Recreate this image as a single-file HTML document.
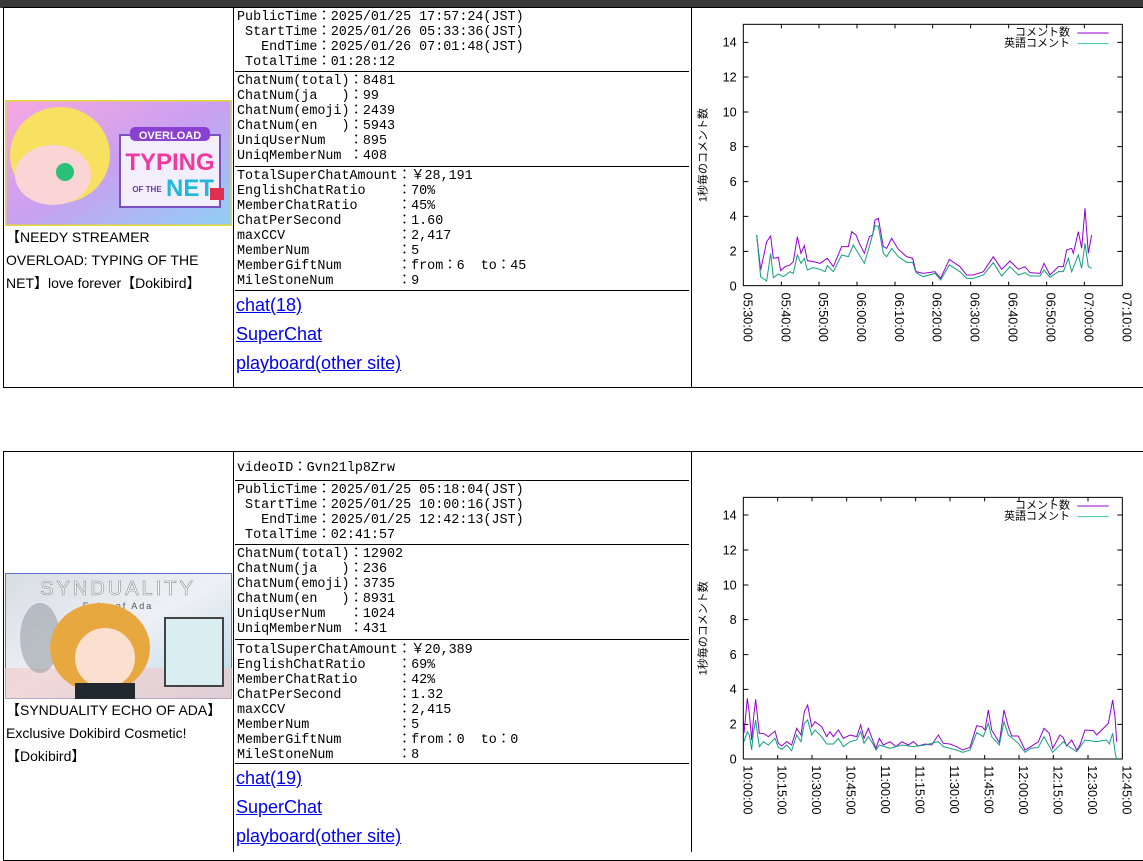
<!DOCTYPE html>
<html><head><meta charset="utf-8"><style>
*{margin:0;padding:0;box-sizing:border-box}
body{width:1143px;height:848px;background:#fff;position:relative;overflow:hidden;font-family:"Liberation Sans","Noto Sans CJK JP",sans-serif}
.a{position:absolute}
.top{left:0;top:0;width:1143px;height:8px;background:#3a3a3a}
.box{border:1px solid #000}
.vl{width:1px;background:#000}
.hl{height:1px;background:#000;left:235px;width:454px}
.m{position:absolute;left:237px;font-family:"Liberation Mono","Noto Sans CJK JP",monospace;font-size:13.4px;line-height:15px;white-space:pre;color:#000}
.t{position:absolute;left:6px;width:226px;font-size:14px;line-height:23px;color:#000}
.lk{position:absolute;left:236px;font-size:18px;color:#0000ee;text-decoration:underline;line-height:20px}
svg text{font-family:"Liberation Sans","Noto Sans CJK JP",sans-serif}
</style></head><body>
<div class="a top"></div>

<!-- table 1 -->
<div class="a box" style="left:3px;top:7px;width:1145px;height:381px"></div>
<div class="a vl" style="left:233px;top:8px;height:380px"></div>
<div class="a vl" style="left:691px;top:8px;height:380px"></div>
<div class="a hl" style="top:71px"></div>
<div class="a hl" style="top:166px"></div>
<div class="a hl" style="top:290px"></div>
<div class="m" style="top:10px">PublicTime：2025/01/25 17:57:24(JST)
 StartTime：2025/01/26 05:33:36(JST)
   EndTime：2025/01/26 07:01:48(JST)
 TotalTime：01:28:12</div>
<div class="m" style="top:74px">ChatNum(total)：8481
ChatNum(ja   )：99
ChatNum(emoji)：2439
ChatNum(en   )：5943
UniqUserNum   ：895
UniqMemberNum ：408</div>
<div class="m" style="top:169px">TotalSuperChatAmount：￥28,191
EnglishChatRatio    ：70%
MemberChatRatio     ：45%
ChatPerSecond       ：1.60
maxCCV              ：2,417
MemberNum           ：5
MemberGiftNum       ：from：6  to：45
MileStoneNum        ：9</div>
<div class="lk" style="top:295px">chat(18)</div>
<div class="lk" style="top:324px">SuperChat</div>
<div class="lk" style="top:353px">playboard(other site)</div>

<svg class="a" style="left:5px;top:100px" width="227" height="126" viewBox="0 0 227 126">
<defs><linearGradient id="g1" x1="0" y1="0" x2="1" y2="1"><stop offset="0" stop-color="#f7a8e0"/><stop offset=".5" stop-color="#c9a0f0"/><stop offset="1" stop-color="#8fd0f5"/></linearGradient></defs>
<rect x="0" y="0" width="227" height="126" fill="url(#g1)" stroke="#e6d830" stroke-width="3"/>
<ellipse cx="55" cy="55" rx="50" ry="48" fill="#f8e060"/>
<ellipse cx="48" cy="75" rx="38" ry="30" fill="#fbd5d5"/>
<circle cx="60" cy="72" r="9" fill="#2ac07a"/>
<rect x="115" y="35" width="100" height="72" fill="#f3eefc" stroke="#7a50c0" stroke-width="2"/>
<rect x="125" y="27" width="80" height="14" rx="5" fill="#8a40d0"/>
<text x="165" y="39" font-size="11" font-weight="bold" fill="#fff" text-anchor="middle">OVERLOAD</text>
<text x="165" y="70" font-size="24" font-weight="bold" fill="#ee3aa0" text-anchor="middle">TYPING</text>
<text x="185" y="96" font-size="24" font-weight="bold" fill="#20b8d8" text-anchor="middle">NET</text>
<text x="142" y="92" font-size="8" font-weight="bold" fill="#6040a0" text-anchor="middle">OF THE</text>
<rect x="205" y="88" width="14" height="12" fill="#e03050"/>
</svg>
<div class="t" style="top:226px">【NEEDY STREAMER OVERLOAD: TYPING OF THE NET】love forever【Dokibird】</div>

<svg class="a" style="left:690px;top:0" width="453" height="390" viewBox="0 0 1359 1170">
<g stroke="#000" stroke-width="3" fill="none">
<rect x="160" y="73" width="1137" height="784"/>
<path d="M160 127h15M160 231h15M160 336h15M160 440h15M160 545h15M160 649h15M160 754h15M1297 127h-15M1297 231h-15M1297 336h-15M1297 440h-15M1297 545h-15M1297 649h-15M1297 754h-15"/>
<path d="M274 857v-12M387 857v-12M501 857v-12M615 857v-12M728 857v-12M842 857v-12M956 857v-12M1070 857v-12M1183 857v-12M274 73v12M387 73v12M501 73v12M615 73v12M728 73v12M842 73v12M956 73v12M1070 73v12M1183 73v12" />
</g>
<g font-size="38" text-anchor="end" fill="#000">
<text x="140" y="140">14</text><text x="140" y="244">12</text><text x="140" y="349">10</text><text x="140" y="453">8</text><text x="140" y="558">6</text><text x="140" y="662">4</text><text x="140" y="767">2</text><text x="140" y="871">0</text>
</g>
<g font-size="38" fill="#000">
<text transform="translate(160 878) rotate(90)">05:30:00</text>
<text transform="translate(274 878) rotate(90)">05:40:00</text>
<text transform="translate(387 878) rotate(90)">05:50:00</text>
<text transform="translate(501 878) rotate(90)">06:00:00</text>
<text transform="translate(615 878) rotate(90)">06:10:00</text>
<text transform="translate(728 878) rotate(90)">06:20:00</text>
<text transform="translate(842 878) rotate(90)">06:30:00</text>
<text transform="translate(956 878) rotate(90)">06:40:00</text>
<text transform="translate(1070 878) rotate(90)">06:50:00</text>
<text transform="translate(1183 878) rotate(90)">07:00:00</text>
<text transform="translate(1297 878) rotate(90)">07:10:00</text>
</g>
<text transform="translate(50 465) rotate(-90)" font-size="33" text-anchor="middle">1秒毎のコメント数</text>
<text x="1140" y="107" font-size="33" text-anchor="end">コメント数</text>
<text x="1140" y="139" font-size="33" text-anchor="end">英語コメント</text>
<path d="M1162 99h94" stroke="#9400d3" stroke-width="3"/>
<path d="M1162 131h94" stroke="#3cc8a0" stroke-width="3"/>
<polyline fill="none" stroke="#9400d3" stroke-width="3" points="200,705 212,810 230,725 242,708 250,775 265,772 272,812 285,800 300,795 310,785 322,710 333,760 343,737 352,782 370,785 390,790 412,775 430,800 455,740 475,740 485,695 498,705 508,730 523,760 538,710 548,705 555,660 565,655 580,740 590,745 605,715 625,748 650,770 668,775 678,815 700,820 735,815 752,835 778,778 795,790 810,800 830,825 850,825 880,815 910,770 935,808 960,783 985,808 1005,800 1020,818 1050,820 1062,790 1080,825 1105,800 1120,800 1130,750 1145,745 1150,760 1165,695 1175,745 1185,625 1195,760 1205,705"/>
<polyline fill="none" stroke="#10a080" stroke-width="3" points="200,705 212,830 230,843 242,760 250,833 265,822 280,830 300,815 310,820 322,765 333,790 343,775 352,810 370,803 390,808 405,815 412,797 430,815 455,765 475,770 490,735 505,760 523,790 538,740 555,678 565,678 580,760 590,770 605,745 625,770 650,787 668,787 678,818 700,830 735,820 752,840 778,795 810,815 830,835 850,835 880,825 910,788 935,828 960,800 985,825 1005,818 1020,828 1050,828 1062,810 1080,832 1105,815 1120,815 1135,775 1145,815 1165,765 1175,805 1185,730 1195,800 1205,805"/>
</svg>

<!-- table 2 -->
<div class="a box" style="left:3px;top:451px;width:1145px;height:410px"></div>
<div class="a vl" style="left:233px;top:452px;height:400px"></div>
<div class="a vl" style="left:691px;top:452px;height:400px"></div>
<div class="a hl" style="top:480px"></div>
<div class="a hl" style="top:544px"></div>
<div class="a hl" style="top:639px"></div>
<div class="a hl" style="top:763px"></div>
<div class="m" style="top:461px">videoID：Gvn21lp8Zrw</div>
<div class="m" style="top:483px">PublicTime：2025/01/25 05:18:04(JST)
 StartTime：2025/01/25 10:00:16(JST)
   EndTime：2025/01/25 12:42:13(JST)
 TotalTime：02:41:57</div>
<div class="m" style="top:547px">ChatNum(total)：12902
ChatNum(ja   )：236
ChatNum(emoji)：3735
ChatNum(en   )：8931
UniqUserNum   ：1024
UniqMemberNum ：431</div>
<div class="m" style="top:643px">TotalSuperChatAmount：￥20,389
EnglishChatRatio    ：69%
MemberChatRatio     ：42%
ChatPerSecond       ：1.32
maxCCV              ：2,415
MemberNum           ：5
MemberGiftNum       ：from：0  to：0
MileStoneNum        ：8</div>
<div class="lk" style="top:768px">chat(19)</div>
<div class="lk" style="top:797px">SuperChat</div>
<div class="lk" style="top:826px">playboard(other site)</div>

<svg class="a" style="left:5px;top:573px" width="227" height="126" viewBox="0 0 227 126">
<defs><linearGradient id="g2" x1="0" y1="0" x2="1" y2="1"><stop offset="0" stop-color="#d8dde4"/><stop offset=".5" stop-color="#eef0f4"/><stop offset="1" stop-color="#b8d8e8"/></linearGradient></defs>
<rect x="0" y="0" width="227" height="126" fill="url(#g2)" stroke="#6070c8" stroke-width="2"/>
<rect x="0" y="95" width="227" height="31" fill="#f4c8c8" opacity=".6"/>
<text x="113" y="22" font-size="20" fill="#fff" stroke="#888" stroke-width=".6" text-anchor="middle" letter-spacing="3">SYNDUALITY</text>
<text x="113" y="36" font-size="9" fill="#555" text-anchor="middle" letter-spacing="2">Echo of Ada</text>
<ellipse cx="35" cy="65" rx="20" ry="35" fill="#9aa0a8" opacity=".6"/>
<ellipse cx="95" cy="75" rx="50" ry="45" fill="#e8a840"/>
<ellipse cx="100" cy="85" rx="30" ry="30" fill="#fbe0d0"/>
<rect x="70" y="110" width="60" height="16" fill="#202830"/>
<rect x="160" y="45" width="58" height="68" fill="#d8eef0" stroke="#444" stroke-width="2"/>
</svg>
<div class="t" style="top:699px">【SYNDUALITY ECHO OF ADA】Exclusive Dokibird Cosmetic!【Dokibird】</div>

<svg class="a" style="left:690px;top:440px" width="453" height="408" viewBox="0 0 1359 1224">
<g stroke="#000" stroke-width="3" fill="none">
<path d="M1297 172H160V957H1297V172"/>
<path d="M160 225h15M160 330h15M160 435h15M160 539h15M160 644h15M160 748h15M160 853h15M1297 225h-15M1297 330h-15M1297 435h-15M1297 539h-15M1297 644h-15M1297 748h-15M1297 853h-15"/>
<path d="M263 957v-12M366 957v-12M470 957v-12M573 957v-12M677 957v-12M780 957v-12M884 957v-12M987 957v-12M1090 957v-12M1194 957v-12M263 172v12M366 172v12M470 172v12M573 172v12M677 172v12M780 172v12M884 172v12M987 172v12M1090 172v12M1194 172v12"/>
</g>
<g font-size="38" text-anchor="end" fill="#000">
<text x="140" y="238">14</text><text x="140" y="343">12</text><text x="140" y="448">10</text><text x="140" y="552">8</text><text x="140" y="657">6</text><text x="140" y="761">4</text><text x="140" y="866">2</text><text x="140" y="970">0</text>
</g>
<g font-size="38" fill="#000">
<text transform="translate(160 976) rotate(90)">10:00:00</text>
<text transform="translate(263 976) rotate(90)">10:15:00</text>
<text transform="translate(366 976) rotate(90)">10:30:00</text>
<text transform="translate(470 976) rotate(90)">10:45:00</text>
<text transform="translate(573 976) rotate(90)">11:00:00</text>
<text transform="translate(677 976) rotate(90)">11:15:00</text>
<text transform="translate(780 976) rotate(90)">11:30:00</text>
<text transform="translate(884 976) rotate(90)">11:45:00</text>
<text transform="translate(987 976) rotate(90)">12:00:00</text>
<text transform="translate(1090 976) rotate(90)">12:15:00</text>
<text transform="translate(1194 976) rotate(90)">12:30:00</text>
<text transform="translate(1297 976) rotate(90)">12:45:00</text>
</g>
<text transform="translate(50 565) rotate(-90)" font-size="33" text-anchor="middle">1秒毎のコメント数</text>
<text x="1140" y="206" font-size="33" text-anchor="end">コメント数</text>
<text x="1140" y="238" font-size="33" text-anchor="end">英語コメント</text>
<path d="M1162 198h94" stroke="#9400d3" stroke-width="3"/>
<path d="M1162 230h94" stroke="#3cc8a0" stroke-width="3"/>
<polyline fill="none" stroke="#9400d3" stroke-width="3" points="162,880 172,775 178,820 185,900 190,840 197,778 203,835 208,880 220,880 235,890 255,873 265,910 275,918 290,905 305,915 320,865 333,885 343,815 353,795 365,860 375,845 395,860 410,890 420,875 430,890 445,870 460,895 480,885 500,890 512,855 522,895 535,865 548,900 558,925 568,895 580,915 600,905 618,920 635,905 655,915 670,905 685,918 705,912 725,915 745,885 760,910 780,912 800,920 818,930 840,922 860,857 875,860 885,870 895,810 905,870 928,908 942,810 955,860 965,888 985,888 1005,930 1022,920 1045,905 1062,865 1078,880 1088,925 1110,885 1120,893 1130,918 1145,900 1160,930 1170,915 1185,870 1210,872 1220,885 1255,850 1268,780 1275,830 1280,905"/>
<polyline fill="none" stroke="#10a080" stroke-width="3" points="162,905 172,875 178,885 185,930 190,880 197,840 203,885 208,920 220,905 235,915 255,895 265,922 275,928 290,915 305,932 320,885 333,905 343,850 353,840 365,885 375,870 395,890 410,912 430,912 445,895 460,920 480,905 500,900 512,875 522,910 535,890 548,910 558,930 568,915 600,925 635,915 670,920 705,915 745,905 760,920 800,930 818,937 840,930 860,878 880,890 895,850 905,890 928,915 942,845 955,885 985,910 1005,937 1022,925 1045,922 1062,890 1088,937 1120,905 1130,915 1160,935 1185,900 1220,905 1250,900 1258,912 1268,880 1275,935 1280,960"/>
</svg>
</body></html>
